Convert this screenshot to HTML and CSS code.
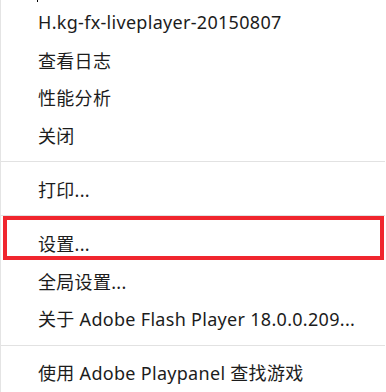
FILE: index.html
```html
<!DOCTYPE html>
<html lang="zh-CN">
<head>
<meta charset="utf-8">
<title>Flash 右键菜单</title>
<link rel="stylesheet" href="styles.css">
</head>
<body>
<div class="menu">
  <span class="tick"></span>
  <div class="item">H.kg-fx-liveplayer-20150807</div>
  <div class="item">查看日志</div>
  <div class="item">性能分析</div>
  <div class="item">关闭</div>
  <div class="sep"></div>
  <div class="item">打印...</div>
  <div class="sep"></div>
  <div class="item highlighted">设置...<span class="mark"></span></div>
  <div class="item">全局设置...</div>
  <div class="item">关于 Adobe Flash Player 18.0.0.209...</div>
  <div class="sep"></div>
  <div class="item">使用 Adobe Playpanel 查找游戏</div>
</div>
</body>
</html>
```
FILE: styles.css
```css
html, body {
  margin: 0;
  padding: 0;
  background: #ffffff;
}

.menu {
  position: relative;
  width: 385px;
  height: 392px;
  box-sizing: border-box;
  border-left: 1px solid #e4e4e4;
  padding-top: 3.25px;
  font-family: "Noto Sans", "Noto Sans CJK SC", sans-serif;
  font-size: 18px;
  letter-spacing: 0.3px;
  color: #1c1c1c;
  background: #ffffff;
}

.tick {
  position: absolute;
  left: 36px;
  top: 0;
  width: 1px;
  height: 2px;
  background: #000000;
}

.item {
  position: relative;
  height: 37.5px;
  display: flex;
  align-items: center;
  padding-left: 37px;
  white-space: nowrap;
}

.sep {
  height: 1px;
  margin: 7.75px 0 8px;
  background: #e2e2e2;
}

.mark {
  position: absolute;
  left: 2px;
  right: 1px;
  top: -8.75px;
  bottom: 2.25px;
  border: 4px solid #f0262e;
}
```
